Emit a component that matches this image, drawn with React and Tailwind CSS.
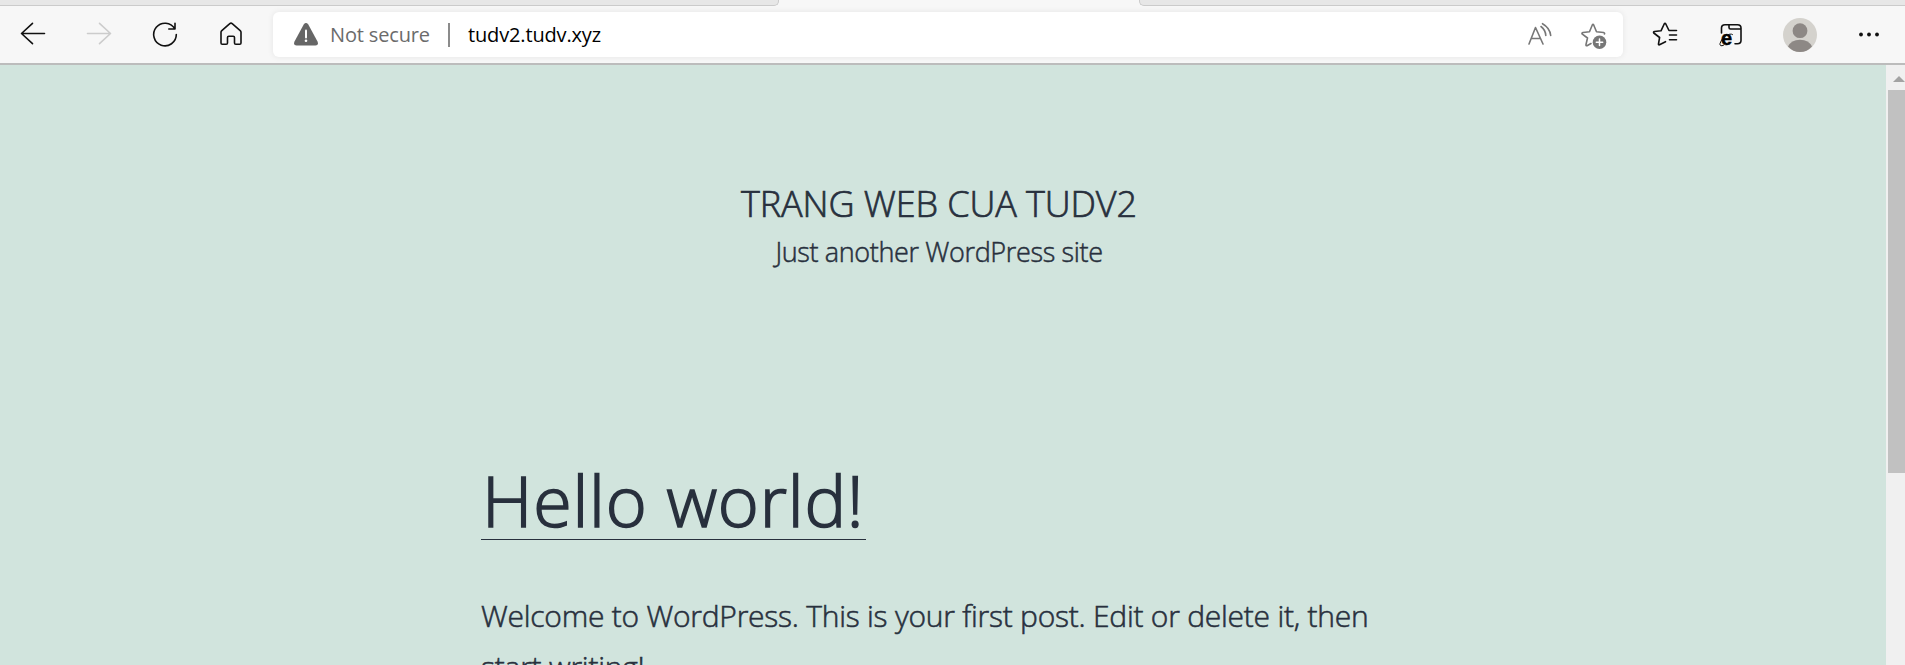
import React from "react";

function Icon({ children, color = "#111111" }) {
  return (
    <svg
      viewBox="-18 -18 36 36"
      className="h-9 w-9 shrink-0"
      fill="none"
      stroke={color}
      strokeWidth="1.6"
      strokeLinecap="round"
      strokeLinejoin="round"
    >
      {children}
    </svg>
  );
}

function ToolButton({ label, children, wide = false }) {
  return (
    <button
      aria-label={label}
      className={wide ? "flex w-[72px] shrink-0 items-center justify-center" : "flex w-[66px] shrink-0 items-center justify-center"}
    >
      {children}
    </button>
  );
}

function TabStrip() {
  return (
    <div className="flex h-1.5 shrink-0 bg-[#f7f7f7]">
      <div className="w-[779px] rounded-br-[5px] border-r border-b border-[#cbcbcb] bg-[#e7e7e7]" />
      <div className="w-[360px]" />
      <div className="flex-1 rounded-bl-[5px] border-b border-l border-[#cbcbcb] bg-[#e7e7e7]" />
    </div>
  );
}

function AddressBar() {
  return (
    <div className="mx-[9px] my-1.5 flex h-[45px] w-[1350px] shrink-0 items-center rounded-md bg-white font-['Open_Sans','Noto_Sans',sans-serif] text-[20px] leading-7 tracking-[-0.15px] shadow-[0_0_6px_rgba(0,0,0,0.08)]">
      <svg viewBox="0 0 24 23" className="ml-[21px] h-[23px] w-6 shrink-0">
        <path d="M9.7 1.5Q12-1.3 14.3 1.5L23.5 18.5Q25 22.5 21.5 22.5H2.5Q-1 22.500.5 18.500Z" fill="#666666" />
        <path d="M12 7.500V14.500" stroke="#fff" strokeWidth="2" strokeLinecap="round" />
        <circle cx="12" cy="17.800" r="1.300" fill="#fff" />
      </svg>
      <span className="ml-3 w-[118px] shrink-0 whitespace-nowrap text-[#6b6b6b]">Not secure</span>
      <span className="h-6 w-0.5 shrink-0 bg-[#8b8b8b]" />
      <span className="ml-[18px] whitespace-nowrap text-black">tudv2.tudv.xyz</span>
      <div className="mr-[11px] ml-auto flex gap-[18px]">
        <Icon color="#777777">
          <path d="M-11 9L-4.500-7.500L3 9M-8.700 3.500H.6M1-8.500Q5.500-5 5.800.5M2.500-11.300Q10-7 10.700.5" />
        </Icon>
        <Icon color="#777777">
          <path d="M-3 8.500L-7 10.800Q-8.300 11-8 9.500L-6.500 3L-12-1.200Q-12.300-2.300-11-2.500L-4.500-3.200L-1.700-10Q-1-11.200-.3-10L2.500-3.200L9.500-2.500Q11-2 10.500-1" />
          <circle cx="5.500" cy="7.300" r="6.800" fill="#777777" stroke="none" />
          <path d="M2.300 7.300H8.700M5.500 4.100V10.500" stroke="#fff" strokeWidth="1.500" />
        </Icon>
      </div>
    </div>
  );
}

function Toolbar() {
  return (
    <div className="flex h-[57px] shrink-0 bg-[#f7f7f7] pb-px">
      <ToolButton label="Back">
        <Icon>
          <path d="M11.500-.5H-11.500M-.5-10.700L-11.500-.5L-.5 9.700" />
        </Icon>
      </ToolButton>
      <ToolButton label="Forward">
        <Icon color="#cccccc">
          <path d="M-11.500-.5H11.500M.5-10.700L11.500-.5L.5 9.700" />
        </Icon>
      </ToolButton>
      <ToolButton label="Refresh">
        <Icon>
          <path d="M11.300.5A11.300 11.300 0 1 1 9.700-5.300M10-10.700V-5H3.800" />
        </Icon>
      </ToolButton>
      <ToolButton label="Home">
        <Icon>
          <path d="M-1.200-10.300Q0-11.300 1.200-10.300L9.200-3.400Q10-2.700 10-1.700V9Q10 10.300 8.700 10.300H4.800Q3.500 10.300 3.500 9V3.500Q3.500 2.200 2.200 2.200H-2.200Q-3.500 2.200-3.500 3.500V9Q-3.500 10.300-4.800 10.300H-8.700Q-10 10.300-10 9V-1.700Q-10-2.700-9.200-3.400Z" />
        </Icon>
      </ToolButton>
      <AddressBar />
      <ToolButton label="Favorites">
        <Icon>
          <path d="M.5 7.700L-5.500 10.800Q-6.700 11.200-6.500 9.800L-5.400 3.500L-11.200-1Q-12-2.300-10.500-2.500L-4-3.200L-.8-10Q0-11.300.8-10L4-3.500H11.500M4.500 1H11.500M4.500 5.700H11.500" />
        </Icon>
      </ToolButton>
      <ToolButton label="Internet Explorer mode">
        <Icon>
          <path d="M-9.500-1V-6Q-9.500-9.300-6-9.300H6.500Q10-9.300 10-6V6.500Q10 9.700 6.500 9.700H4M-2-9.300V-6.500Q-2-5-.5-5H10" />
          <text x="-10" y="11" fill="#000" stroke="#000" strokeWidth=".5" fontFamily="Liberation Sans, sans-serif" fontSize="20" fontWeight="700">
            e
          </text>
          <path d="M-7.500 11.300Q-11.500 13-11 9.500Q-10 5-5.500 2Q-.5-1 1.500.5" strokeWidth="1" />
        </Icon>
      </ToolButton>
      <ToolButton label="Profile" wide>
        <Icon>
          <g stroke="none">
            <circle cx="0" cy="1" r="17" fill="#d4d2cd" />
            <circle cx="0" cy="-3.300" r="7.400" fill="#8d8885" />
            <path d="M-12 12.500Q-9 6 0 5.700Q9 6 12 12.500Q7 18 0 18Q-7 18-12 12.500Z" fill="#8d8885" />
          </g>
        </Icon>
      </ToolButton>
      <ToolButton label="Settings and more">
        <Icon>
          <g fill="#111111" stroke="none">
            <circle cx="-8" cy=".5" r="1.900" />
            <circle cx="0" cy=".5" r="1.900" />
            <circle cx="8" cy=".5" r="1.900" />
          </g>
        </Icon>
      </ToolButton>
    </div>
  );
}

function Scrollbar() {
  return (
    <div className="flex w-[19px] shrink-0 flex-col bg-[#f0f0f0] pl-0.5">
      <div className="flex h-[25px] shrink-0 items-center justify-center pl-1">
        <svg viewBox="0 0 12 6" className="mt-0.5 h-1.5 w-3">
          <path d="M0 6L6 0L12 6Z" fill="#a3a3a3" />
        </svg>
      </div>
      <div className="h-[383px] shrink-0 bg-[#c1c1c1]" />
    </div>
  );
}

function Site() {
  return (
    <main className="min-w-0 flex-1 overflow-hidden bg-[#d1e4dd] pt-[115px] font-['Open_Sans','Noto_Sans',sans-serif] font-light text-[#28303d]">
      <header className="flex flex-col items-center pr-[8px] text-center whitespace-nowrap">
        <h1 className="text-[36px] leading-[48px] font-light tracking-[-0.1px] [-webkit-text-stroke:0.7px_#28303d]">TRANG WEB CUA TUDV2</h1>
        <p className="mt-0.5 text-[27px] leading-[44px] tracking-[-0.36px] [-webkit-text-stroke:0.5px_#28303d]">Just another WordPress site</p>
      </header>
      <article className="mt-[179px] ml-[481px] whitespace-nowrap">
        <h2 className="h-[87px] w-[385px] border-b border-[#28303d] pl-px text-[70px] leading-[94px] font-light tracking-[0.8px] [-webkit-text-stroke:1.6px_#28303d]">Hello world!</h2>
        <p className="mt-[50px] text-[30px] leading-[51px] tracking-[-0.24px] [-webkit-text-stroke:0.55px_#28303d]">
          Welcome to WordPress. This is your first post. Edit or delete it, then
          <br />
          start writing!
        </p>
      </article>
    </main>
  );
}

export default function App() {
  return (
    <div className="flex h-[665px] w-[1905px] flex-col overflow-hidden">
      <TabStrip />
      <Toolbar />
      <div className="flex min-h-0 flex-1 border-t-2 border-[#bcbcbc]">
        <Site />
        <Scrollbar />
      </div>
    </div>
  );
}
